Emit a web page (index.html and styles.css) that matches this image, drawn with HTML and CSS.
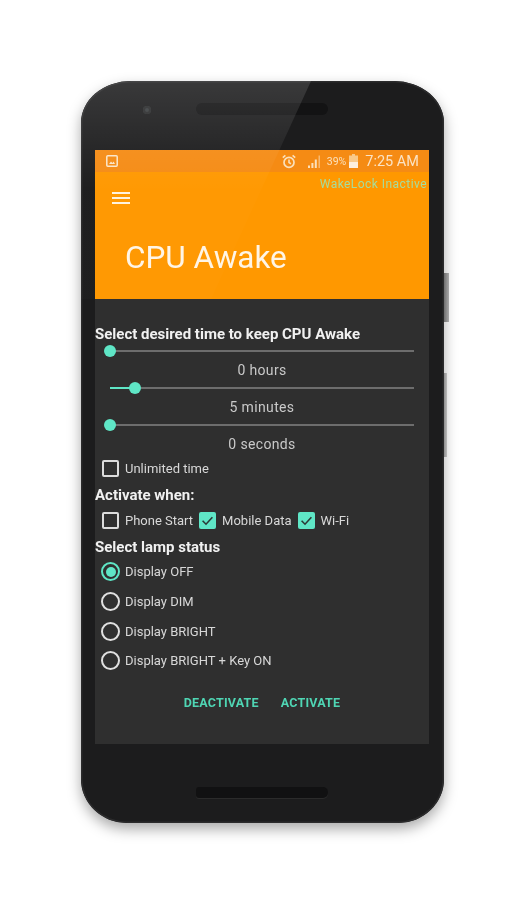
FILE: index.html
```html
<!DOCTYPE html>
<html lang="en">
<head>
  <meta charset="UTF-8" />
  <meta name="viewport" content="width=device-width, initial-scale=1.0" />
  <title>CPU Awake</title>
  <link rel="stylesheet" href="styles.css">
</head>
<body>
  <div class="phone">
    <span class="side-btn power"></span>
    <span class="side-btn volume"></span>
    <div class="bezel-top">
      <span class="camera"></span>
      <span class="speaker"></span>
    </div>

    <div class="screen">
      <div class="statusbar">
        <svg class="st-pic" width="12" height="12" viewBox="0 0 12 12">
          <rect x="0.8" y="0.8" width="10.4" height="10.4" rx="1" fill="none" stroke="#fbe6c8" stroke-width="1.5"/>
          <path d="M3 9l2-2.6 1.4 1.5L7.6 6.6 9 9z" fill="#fbe6c8"/>
        </svg>
        <span class="st-space"></span>
        <svg class="st-alarm" width="14" height="15" viewBox="0 0 14 15">
          <circle cx="7" cy="8.4" r="5" fill="none" stroke="#fbe0bb" stroke-width="1.7"/>
          <path d="M7 5.6v3l2 1.2M0.8 3.6L3.4 1.3M13.2 3.6L10.6 1.3" fill="none" stroke="#fbe0bb" stroke-width="1.6"/>
        </svg>
        <svg class="st-signal" width="13" height="13" viewBox="0 0 13 13">
          <path d="M0 13h2v-2.5H0zM3.4 13h2V8H3.4zM6.8 13h2V4.5h-2z" fill="#fbe0bb"/>
          <path d="M10.6 13h1.2V0.5h-1.2z" fill="#fbe0bb" opacity="0.7"/>
        </svg>
        <span class="st-pct">39%</span>
        <svg class="st-batt" width="9" height="14" viewBox="0 0 9 14">
          <path d="M3 0h3v1.4h3V14H0V1.4h3z" fill="#f9c98a"/>
          <path d="M0 8h9v6H0z" fill="#fdeedd"/>
        </svg>
        <span class="st-time">7:25 AM</span>
      </div>

      <div class="toolbar">
        <div class="wakelock">WakeLock Inactive</div>
        <div class="menu-icon"><i></i><i></i><i></i></div>
        <h1>CPU Awake</h1>
      </div>

      <div class="content">
        <div class="section-title first">Select desired time to keep CPU Awake</div>

        <div class="slider"><span class="fill fill-0"></span><span class="thumb"></span></div>
        <div class="slider-label">0 hours</div>
        <div class="slider"><span class="fill fill-5"></span><span class="thumb"></span></div>
        <div class="slider-label">5 minutes</div>
        <div class="slider"><span class="fill fill-0"></span><span class="thumb"></span></div>
        <div class="slider-label">0 seconds</div>

        <div class="check-row unlimited">
          <span class="check"></span><span>Unlimited time</span>
        </div>

        <div class="section-title activate">Activate when:</div>
        <div class="check-row when">
          <span class="check"></span><span class="when-label">Phone Start</span>
          <span class="check on"><svg width="17" height="17" viewBox="0 0 17 17"><path d="M3.6 8.8l3.4 3.4 6.4-7" fill="none" stroke="#2b3a36" stroke-width="1.6"/></svg></span><span class="when-label">Mobile Data</span>
          <span class="check on"><svg width="17" height="17" viewBox="0 0 17 17"><path d="M3.6 8.8l3.4 3.4 6.4-7" fill="none" stroke="#2b3a36" stroke-width="1.6"/></svg></span><span>Wi-Fi</span>
        </div>

        <div class="section-title lamp">Select lamp status</div>
        <div class="radio-row"><span class="radio on"></span><span>Display OFF</span></div>
        <div class="radio-row"><span class="radio"></span><span>Display DIM</span></div>
        <div class="radio-row"><span class="radio"></span><span>Display BRIGHT</span></div>
        <div class="radio-row"><span class="radio"></span><span>Display BRIGHT + Key ON</span></div>

        <div class="actions">
          <span>DEACTIVATE</span>
          <span>ACTIVATE</span>
        </div>
      </div>
    </div>

    <div class="bezel-bottom"><span class="speaker-low"></span></div>
    <div class="glare"></div>
  </div>
</body>
</html>
```

FILE: styles.css
```css
html, body {
  margin: 0;
  height: 900px;
  overflow: hidden;
  background: #fff;
}
body {
  font-family: Roboto, "Liberation Sans", sans-serif;
  padding-top: 81px;
  box-sizing: border-box;
}

.phone {
  position: relative;
  box-sizing: border-box;
  width: 363px;
  height: 742px;
  margin-left: 81px;
  padding: 0 15px 0 14px;
  background: #1c1c1d;
  border-radius: 50px 50px 46px 46px / 42px 42px 44px 44px;
  box-shadow: inset 0 0 0 1.5px #2b2b2c, 0 6px 14px rgba(0, 0, 0, 0.34);
}
.side-btn {
  position: absolute;
  left: 363px;
  width: 5px;
  background: linear-gradient(to right, #6e6e6e, #a9a9a9);
}
.power { top: 192px; height: 49px; }
.volume { top: 292px; height: 84px; width: 3px; opacity: 0.7; }

.bezel-top {
  display: flex;
  align-items: center;
  height: 69px;
  position: relative;
}
.camera {
  width: 8px;
  height: 8px;
  margin: -12px 0 0 48px;
  border-radius: 50%;
  background: #3a3d3f;
  box-shadow: inset 0 0 0 2px #2a2b2c;
}
.speaker {
  width: 132px;
  height: 12px;
  margin: -13px 0 0 45px;
  border-radius: 6px;
  background: #131314;
}

.screen {
  height: 594px;
  background: #2f2f2f;
  color: #e4e4e4;
  filter: blur(0.45px);
  overflow: hidden;
}

.statusbar {
  display: flex;
  align-items: center;
  height: 22px;
  background: #f58b14;
  padding: 0 10px 0 11px;
}
.st-space { flex: 1; }
.st-alarm { margin-right: 12px; }
.st-signal { margin-right: 6px; }
.st-pct {
  font-size: 10.5px;
  color: #fbe0bb;
  margin-right: 3px;
}
.st-batt { margin-right: 7px; }
.st-time {
  font-size: 14.5px;
  color: #fbe3c4;
}

.toolbar {
  position: relative;
  height: 127px;
  background: #ff9800;
  color: #fff;
}
.wakelock {
  padding: 5px 2px 0 0;
  text-align: right;
  font-size: 12px;
  line-height: 14px;
  letter-spacing: 0.45px;
  color: #a5dd9d;
}
.menu-icon {
  width: 18px;
  margin: 1px 0 0 17px;
}
.menu-icon i {
  display: block;
  height: 2px;
  margin-bottom: 3px;
  background: #fff3df;
}
.toolbar h1 {
  margin: 36px 0 0 30px;
  font-size: 31.5px;
  line-height: 36px;
  font-weight: 400;
  color: #fff5e6;
}

.content {
  padding-top: 26px;
}
.section-title {
  font-size: 15px;
  line-height: 18px;
  font-weight: 700;
  color: #f1f1f1;
}

.slider {
  position: relative;
  height: 2px;
  margin-left: 15px;
  width: 304px;
  background: #6d6d6d;
}
.first { margin-bottom: 7px; }
.fill {
  position: absolute;
  left: 0;
  top: 0;
  height: 2px;
  background: #5fe6c6;
}
.thumb {
  position: absolute;
  top: -5px;
  width: 12px;
  height: 12px;
  border-radius: 50%;
  background: #5fe6c6;
  margin-left: -6px;
}
.fill-0 { width: 0; }
.fill-5 { width: 25px; }
.fill-5 + .thumb { left: 25px; }

.slider-label {
  height: 35px;
  line-height: 37px;
  margin-left: 15px;
  width: 304px;
  text-align: center;
  font-size: 14px;
  letter-spacing: 0.35px;
  color: #c9c9c9;
}

.check-row {
  display: flex;
  align-items: center;
  font-size: 13px;
  color: #d8d8d8;
  height: 17px;
  padding-left: 7px;
}
.unlimited { margin-top: -1px; }
.check {
  box-sizing: border-box;
  flex: none;
  width: 17px;
  height: 17px;
  margin-right: 6px;
  border: 2px solid #dcdcdc;
  border-radius: 2px;
}
.check.on {
  border: 0;
  background: #5fe6c6;
}
.check svg { display: block; }
.when-label { margin-right: 6px; }

.activate { margin-top: 9px; }
.when { margin-top: 8px; }
.lamp { margin-top: 9px; margin-bottom: 1px; }

.radio-row {
  display: flex;
  align-items: center;
  height: 29.7px;
  padding-left: 6px;
  font-size: 13px;
  color: #d8d8d8;
}
.radio {
  position: relative;
  box-sizing: border-box;
  flex: none;
  width: 19px;
  height: 19px;
  margin-right: 5px;
  border: 2px solid #e0e0e0;
  border-radius: 50%;
}
.radio.on { border-color: #5fe6c6; }
.radio.on::after {
  content: "";
  position: absolute;
  left: 2.5px;
  top: 2.5px;
  width: 10px;
  height: 10px;
  border-radius: 50%;
  background: #5fe6c6;
}

.actions {
  display: flex;
  justify-content: center;
  gap: 22px;
  margin-top: 19px;
  font-size: 12.5px;
  line-height: 16px;
  font-weight: 700;
  letter-spacing: 0.2px;
  color: #4fd6b4;
}

.bezel-bottom {
  display: flex;
  justify-content: center;
  padding: 43px 0 0 0;
}
.speaker-low {
  width: 132px;
  height: 11px;
  border-radius: 3px 5px 5px 3px;
  background: #111112;
  box-shadow: 0 1px 0 #2b2b2b;
}

.glare {
  position: absolute;
  left: 0;
  top: 0;
  width: 100%;
  height: 260px;
  border-radius: 50px 0 0 0 / 42px 0 0 0;
  background: linear-gradient(180deg, rgba(255, 255, 255, 0.13), rgba(255, 255, 255, 0.05) 68px, rgba(255, 255, 255, 0.012) 110px);
  clip-path: polygon(0 0, 230px 0, 130px 218px, 0 218px);
  pointer-events: none;
}
```
